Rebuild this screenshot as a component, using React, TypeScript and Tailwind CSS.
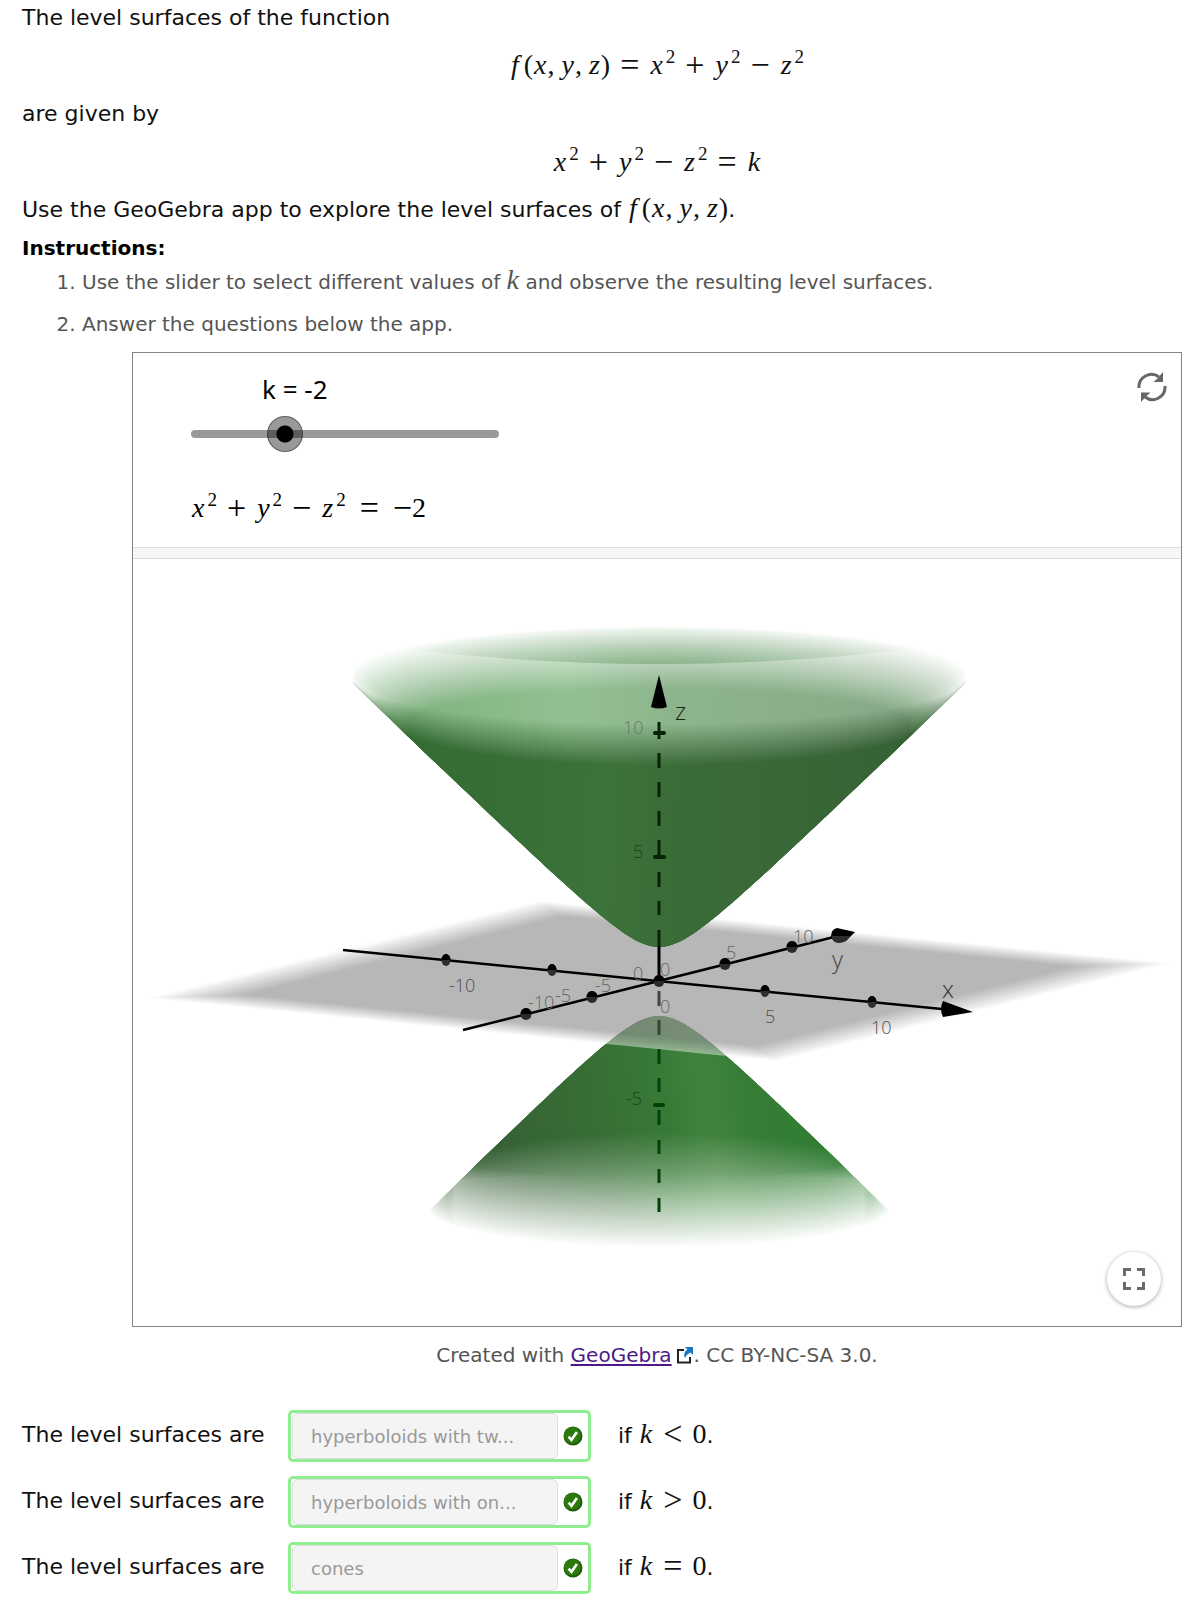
import { useState } from "react";
import type { ReactNode } from "react";

function Math({ children }: { children: ReactNode }) {
  return (
    <span className="font-['Liberation_Serif','Times_New_Roman',serif] text-[28px] leading-none whitespace-nowrap">
      {children}
    </span>
  );
}
function V({ children }: { children: ReactNode }) {
  return <i className="mx-px">{children}</i>;
}
function Sq({ children }: { children: ReactNode }) {
  return (
    <>
      <V>{children}</V>
      <span className="ml-0.5 align-[11px] text-[19px] leading-none">2</span>
    </>
  );
}
function Op({ children }: { children: ReactNode }) {
  return <span className="mx-2.5 align-[-2px] text-[34px] leading-none">{children}</span>;
}
function Quadric() {
  return (
    <>
      <Sq>x</Sq>
      <Op>+</Op>
      <Sq>y</Sq>
      <Op>−</Op>
      <Sq>z</Sq>
    </>
  );
}
function Fxyz() {
  return (
    <>
      <V>f</V>
      <span className="ml-1">(</span>
      <V>x</V>
      <span className="mr-1.5">,</span>
      <V>y</V>
      <span className="mr-1.5">,</span>
      <V>z</V>)
    </>
  );
}

const CX = 659;
const CY = 981;

function branch(sign: number, a: number, m2: number, reach: number) {
  const far = CY + sign * 420;
  const pts: string[] = [`${CX - reach},${far}`];
  for (let dx = -reach; dx <= reach; dx += 6) {
    const y = CY + sign * globalThis.Math.sqrt(a * a + m2 * dx * dx);
    pts.push(`${CX + dx},${y.toFixed(1)}`);
  }
  pts.push(`${CX + reach},${far}`);
  return `M${pts.join("L")}Z`;
}

const upper = branch(-1, 34, 0.931, 306);
const lower = branch(1, 35, 0.975, 240);

const STEPS = 40;
type Ring = { cy: number; rx: number; ry: number };

function rings(from: Ring, to: Ring) {
  return Array.from({ length: STEPS }, (_, i) => {
    const t = i / (STEPS - 1);
    return {
      cy: from.cy + (to.cy - from.cy) * t,
      rx: from.rx + (to.rx - from.rx) * t,
      ry: from.ry + (to.ry - from.ry) * t,
      alpha: 1 / (STEPS - i),
      i,
    };
  });
}

function BackFade({ from, to, floor, fill }: { from: Ring; to: Ring; floor: number; fill: string }) {
  return (
    <>
      {rings(from, to).map((r) => (
        <path
          key={r.i}
          fill={fill}
          fillOpacity={r.alpha}
          d={`M${CX - r.rx},${floor}V${r.cy}A${r.rx},${r.ry} 0 0 1 ${CX + r.rx},${r.cy}V${floor}Z`}
        />
      ))}
    </>
  );
}

function FrontFade({ from, to, limit, fill }: { from: Ring; to: Ring; limit: number; fill: string }) {
  return (
    <>
      {rings(from, to).map((r) => (
        <path
          key={r.i}
          fill={fill}
          fillOpacity={r.alpha}
          d={
            limit > r.cy
              ? `M330,${r.cy + 6}L${CX - r.rx},${r.cy}A${r.rx},${r.ry} 0 0 0 ${CX + r.rx},${r.cy}L990,${r.cy + 6}V${limit}H330Z`
              : `M${CX - r.rx},${limit}V${r.cy}A${r.rx},${r.ry} 0 0 0 ${CX + r.rx},${r.cy}V${limit}Z`
          }
        />
      ))}
    </>
  );
}

const planeCorners = [
  [148, 998],
  [540, 901],
  [1170, 963],
  [777, 1061],
];
function planeAt(scale: number) {
  return planeCorners
    .map(([x, y]) => `${(CX + (x - CX) * scale).toFixed(1)},${(CY + (y - CY) * scale).toFixed(1)}`)
    .join(" ");
}

const zDashes = [
  [722, 739], [753, 768], [782, 797], [811, 826], [840, 857], [872, 887], [901, 915], [930, 946],
];
const zDashesBelow = [
  [1049, 1064], [1078, 1092], [1110, 1125], [1140, 1154], [1169, 1183], [1198, 1212],
];
const xDots = [[446, 960], [552, 970], [765, 991], [872, 1002]];
const yDots = [[526, 1014], [592, 997], [725, 964], [792, 947]];

const labels: [number, number, string, string][] = [
  [623, 734, "10", "#6c766c"],
  [633, 858, "5", "#1f3f1f"],
  [626, 1105, "-5", "#1c451c"],
  [449, 992, "-10", "#505050"],
  [555, 1002, "-5", "#666666"],
  [528, 1009, "-10", "#666666"],
  [595, 992, "-5", "#666666"],
  [633, 980, "0", "#666666"],
  [660, 976, "0", "#666666"],
  [660, 1013, "0", "#666666"],
  [765, 1023, "5", "#505050"],
  [871, 1034, "10", "#505050"],
  [726, 959, "5", "#666666"],
  [793, 943, "10", "#666666"],
];

function Surface() {
  return (
    <svg viewBox="133 559 1048 767" className="block h-auto w-full" role="img" aria-label="Hyperboloid of two sheets with coordinate axes">
      <defs>
        <clipPath id="up"><path d={upper} /></clipPath>
        <clipPath id="low"><path d={lower} /></clipPath>
        <linearGradient id="upFill" gradientUnits="userSpaceOnUse" x1="380" y1="740" x2="930" y2="770">
          <stop offset="0" stopColor="#336b31" />
          <stop offset="0.22" stopColor="#376e36" />
          <stop offset="0.42" stopColor="#3c733a" />
          <stop offset="0.54" stopColor="#3a6c38" />
          <stop offset="0.75" stopColor="#386837" />
          <stop offset="1" stopColor="#356035" />
        </linearGradient>
        <linearGradient id="upBack" gradientUnits="userSpaceOnUse" x1="360" y1="0" x2="960" y2="0">
          <stop offset="0" stopColor="#79b079" />
          <stop offset="0.35" stopColor="#93c093" />
          <stop offset="0.52" stopColor="#8db58d" />
          <stop offset="1" stopColor="#87a687" />
        </linearGradient>
        <radialGradient id="rim" gradientUnits="userSpaceOnUse" cx="659" cy="670" r="290" gradientTransform="translate(0 562.8) scale(1 0.16)">
          <stop offset="0" stopColor="#4c8a4c" stopOpacity="0.46" />
          <stop offset="1" stopColor="#4c8a4c" stopOpacity="0" />
        </radialGradient>
        <linearGradient id="lowFill" gradientUnits="userSpaceOnUse" x1="500" y1="1150" x2="850" y2="1100">
          <stop offset="0" stopColor="#366235" />
          <stop offset="0.3" stopColor="#376f35" />
          <stop offset="0.48" stopColor="#377a36" />
          <stop offset="0.6" stopColor="#41833e" />
          <stop offset="0.72" stopColor="#367d36" />
          <stop offset="1" stopColor="#2f7d32" />
        </linearGradient>
      </defs>

      <g clipPath="url(#low)">
        <FrontFade from={{ cy: 1207, rx: 232, ry: 40 }} to={{ cy: 1163, rx: 188, ry: 14 }} limit={1000} fill="url(#lowFill)" />
        <g opacity="0.3">
          <BackFade from={{ cy: 1176, rx: 212, ry: 44 }} to={{ cy: 1182, rx: 204, ry: 6 }} floor={1260} fill="#ffffff" />
        </g>
      </g>

      <polygon points={planeAt(1)} fill="#ffffff" fillOpacity="0.45" />
      <g opacity="0.39">
        {Array.from({ length: STEPS }, (_, i) => (
          <polygon key={i} points={planeAt(1 - (0.2 * i) / STEPS)} fill="#494949" fillOpacity={1 / (STEPS - i)} />
        ))}
      </g>

      <g clipPath="url(#up)">
        <BackFade from={{ cy: 675, rx: 308, ry: 49 }} to={{ cy: 722, rx: 250, ry: 34 }} floor={770} fill="url(#upBack)" />
        <path d="M405,649Q659,679 913,649A308,49 0 0 0 405,649Z" fill="url(#rim)" />
        <FrontFade from={{ cy: 679, rx: 306, ry: 45 }} to={{ cy: 722, rx: 266, ry: 43 }} limit={960} fill="url(#upFill)" />
      </g>

      <g stroke="#062306" strokeWidth="3">
        {zDashes.map(([a, b]) => <path key={a} d={`M659,${a}V${b}`} />)}
        <path d="M655,733H664M655,857H664" strokeWidth="4" strokeLinecap="round" />
      </g>
      <g stroke="#054008" strokeWidth="3">
        {zDashesBelow.map(([a, b]) => <path key={a} d={`M659,${a}V${b}`} />)}
        <path d="M655,1105H663" strokeWidth="4" strokeLinecap="round" />
      </g>
      <path d="M659,991V1006" stroke="#444444" strokeWidth="3" />
      <path d="M659,1020V1035" stroke="#334733" strokeWidth="3" />
      <path d="M659,946V981" stroke="#000000" strokeWidth="3" />
      <path d="M659,675L667,707Q659,710 651,707Z" />

      <path d="M343,950L942,1009" stroke="#000000" strokeWidth="2.6" />
      <path d="M463,1030L834,937" stroke="#000000" strokeWidth="2.6" />
      <path d="M943,1001L973,1012L943,1017Q939,1009 943,1001Z" />
      <path d="M837,928L855,932L846,941Q836,945 831,937Q831,929 837,928Z" />
      <path d="M832,936H850L846,941Q836,946 832,939Z" fill="#2d2d2d" />
      {xDots.map(([x, y]) => (
        <g key={x}>
          <ellipse cx={x} cy={y} rx="4.5" ry="6" fill="#2f2f2f" />
          <path d={`M${x - 4.5},${y}A4.5,6 0 0 1 ${x + 4.5},${y}Z`} />
        </g>
      ))}
      {[...yDots, [659, 981]].map(([x, y]) => (
        <g key={x}>
          <ellipse cx={x} cy={y} rx="5.5" ry="6" fill="#2a2a2a" />
          <path d={`M${x - 5.5},${y}A5.5,6 0 0 1 ${x + 5.5},${y}Z`} />
        </g>
      ))}

      <g className="font-['Open_Sans','Noto_Sans',sans-serif] text-[18px] font-light">
        {labels.map(([x, y, text, fill]) => (
          <text key={`${x}-${y}`} x={x} y={y} fill={fill}>{text}</text>
        ))}
      </g>
      <g className="font-['Open_Sans','Noto_Sans',sans-serif] text-[24px] font-light">
        <text x="675" y="720" fill="#162516">z</text>
        <text x="832" y="968" fill="#444444">y</text>
        <text x="942" y="998" fill="#333333">x</text>
      </g>
    </svg>
  );
}

function Check() {
  return (
    <svg viewBox="0 0 20 20" className="size-5 shrink-0" role="img" aria-label="Correct">
      <circle cx="10" cy="10" r="9.5" fill="#1f5c07" />
      <circle cx="9.4" cy="9.4" r="8.3" fill="#2c7a0c" />
      <path d="M5.6 10.6l2.9 3.2 5.4-7.8" fill="none" stroke="#fff" strokeWidth="2.6" />
    </svg>
  );
}

const answers = [
  { shown: "hyperboloids with tw...", op: "<" },
  { shown: "hyperboloids with on...", op: ">" },
  { shown: "cones", op: "=" },
];

export default function App() {
  const [k, setK] = useState(-2);
  return (
    <main className="bg-white pr-[7px] pb-2.5 pl-[22px] font-['DejaVu_Sans',Verdana,sans-serif] text-[22px] text-[#111]">
      <p className="leading-[36px]">The level surfaces of the function</p>
      <p className="pt-[3px] pl-[110px] text-center leading-[55px]">
        <Math><Fxyz /><Op>=</Op><Quadric /></Math>
      </p>
      <p className="leading-[40px]">are given by</p>
      <p className="pt-[3px] pl-[110px] text-center leading-[53px]">
        <Math><Quadric /><Op>=</Op><V>k</V></Math>
      </p>
      <p className="leading-[40px]">
        Use the GeoGebra app to explore the level surfaces of <Math><Fxyz /></Math>.
      </p>
      <h2 className="text-[20px] leading-[36px] font-bold text-black">Instructions:</h2>
      <ol className="flex list-decimal flex-col gap-2.5 pl-[60px] text-[20px] leading-[32px] text-[#555]">
        <li>
          Use the slider to select different values of <Math>
            <i>k</i>
          </Math>{" "}
          and observe the resulting level surfaces.
        </li>
        <li>Answer the questions below the app.</li>
      </ol>

      <section className="relative mt-3 ml-[110px] border border-[#848484]">
        <div className="flex items-start justify-between pt-4 pb-[11px]">
          <div className="pl-11">
            <label htmlFor="k" className="block pl-[85px] font-['Noto_Sans','Open_Sans',sans-serif] text-[26px] leading-[40px] text-black">
              k = {k}
            </label>
            <div className="relative mt-[7px] h-9 w-[336px]">
              <div className="absolute inset-x-[14px] top-[14px] h-2 rounded-full bg-[#999]" />
              <input
                id="k"
                type="range"
                min={-5}
                max={5}
                value={k}
                onChange={(e) => setK(Number(e.target.value))}
                className="relative block h-9 w-full appearance-none bg-transparent [&::-webkit-slider-thumb]:size-9 [&::-webkit-slider-thumb]:appearance-none [&::-webkit-slider-thumb]:rounded-full [&::-webkit-slider-thumb]:border [&::-webkit-slider-thumb]:border-black/40 [&::-webkit-slider-thumb]:bg-[radial-gradient(circle,#000_8px,rgba(0,0,0,0.4)_9px)]"
              />
            </div>
            <p className="mt-7 pt-[3px] pl-3.5 leading-[53px] text-black">
              <Math><Quadric /><span className="mx-1"><Op>=</Op></span><span className="align-[-2px] text-[34px] leading-none">{k < 0 ? "−" : ""}</span>{k < 0 ? -k : k}</Math>
            </p>
          </div>
          <button type="button" aria-label="Reset" className="mr-[13px]">
            <svg viewBox="0 0 32 32" className="mt-0.5 size-8" fill="none" stroke="#666" strokeWidth="3">
              <path d="M3 17A12.5 12.5 0 0 1 23 6" />
              <path d="M29 15A12.5 12.5 0 0 1 9 26" />
              <path d="M27 1V11H17.5L21.500 7.500Z" fill="#666" stroke="none" />
              <path d="M5 31V21.500H14.500L10.500 25Z" fill="#666" stroke="none" />
            </svg>
          </button>
        </div>
        <div className="h-3 border-y border-[#dcdcdc] bg-[#f7f7f7]" />
        <Surface />
        <button
          type="button"
          aria-label="Fullscreen"
          className="absolute right-5 bottom-5 flex size-[54px] items-center justify-center rounded-full bg-white shadow-[0_1px_4px_rgba(0,0,0,0.35)]"
        >
          <svg viewBox="0 0 22 22" className="size-[22px]" fill="none" stroke="#6b6b6b" strokeWidth="3">
            <path d="M1.5 8V1.5H8M14 1.5H20.5V8M20.5 14V20.5H14M8 20.5H1.5V14" />
          </svg>
        </button>
      </section>

      <p className="mt-3 flex items-center justify-center pl-[110px] text-[20px] leading-[32px] whitespace-pre text-[#555]">
        Created with{" "}
        <a href="#geogebra" className="flex items-center text-[#4b1a85]">
          <span className="underline underline-offset-2">GeoGebra</span>
          <svg viewBox="0 0 18 18" className="ml-1 size-[18px]" fill="none">
            <path d="M8 4H2V16.5H14V11" stroke="#222" strokeWidth="2" />
            <path d="M9 1H17V9L14.5 6.5Q10.5 8 9 12Q6.5 7 11.5 3.5Z" fill="#1577c0" />
          </svg>
        </a>
        . CC BY-NC-SA 3.0.
      </p>

      <div className="mt-[39px] flex flex-col gap-3.5">
        {answers.map(({ shown, op }) => (
          <div key={op} className="flex items-center">
            <label htmlFor={`answer-${op}`} className="w-[266px] pb-1 whitespace-nowrap">The level surfaces are</label>
            <div className="flex h-[52px] w-[303px] items-center rounded-[5px] border-[3px] border-[#90ee90] pl-px">
              <select
                id={`answer-${op}`}
                defaultValue={shown}
                className="mr-[5px] h-[46px] w-[266px] appearance-none rounded-md border border-[#ddd] bg-[#f4f4f4] pl-[18px] text-[18px] text-[#999]"
              >
                <option>{shown}</option>
              </select>
              <Check />
            </div>
            <span className="ml-[27px] pb-1">
              if <Math><V>k</V><Op>{op}</Op>0</Math>.
            </span>
          </div>
        ))}
      </div>
    </main>
  );
}
